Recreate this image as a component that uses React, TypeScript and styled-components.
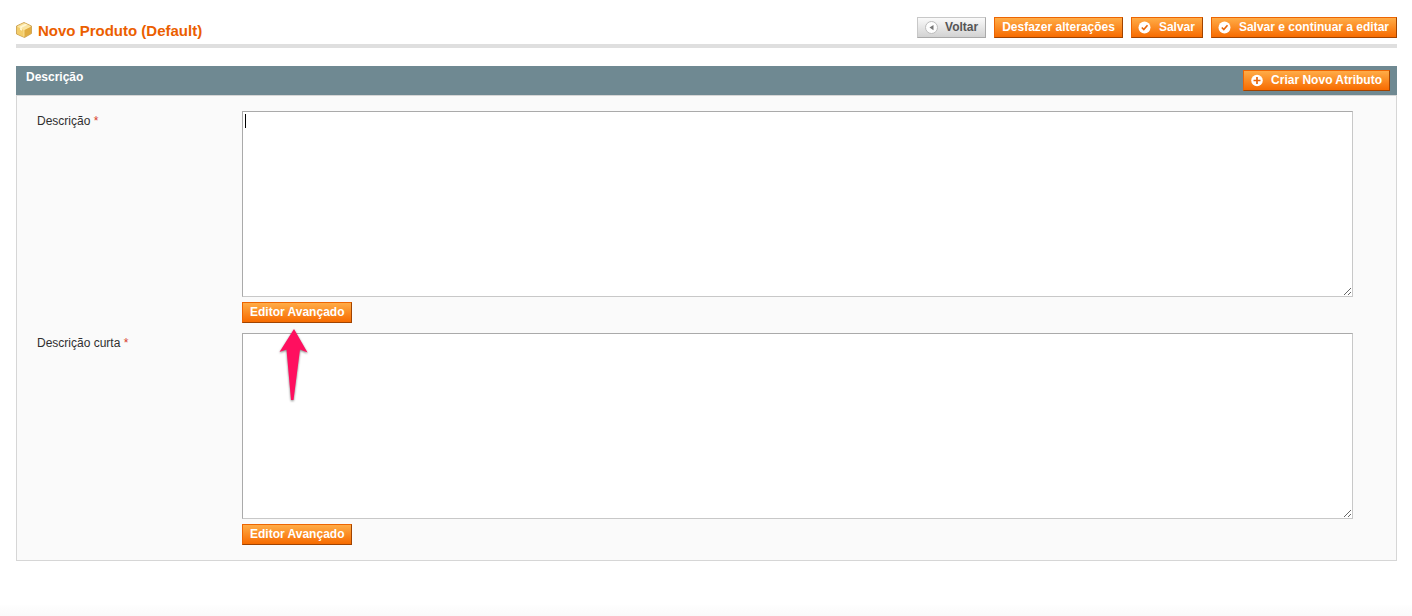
import React from 'react';
import styled, { createGlobalStyle, css } from 'styled-components';

const GlobalStyle = createGlobalStyle`
  *, *::before, *::after { box-sizing: border-box; }
  body {
    margin: 0;
    background: #fff;
    color: #2f2f2f;
    font: 12px/18px Arial, "Liberation Sans", sans-serif;
  }
`;

const Page = styled.main`
  min-height: 100vh;
  padding: 17px 15px 16px 16px;
  background: linear-gradient(#fefefe, #fafafa) bottom / 100% 11px no-repeat;
`;

const ContentHeader = styled.header`
  display: flex;
  justify-content: space-between;
  align-items: flex-start;
  margin-bottom: 18px;
  padding-bottom: 4px;
  border-bottom: 4px solid #dfdfdf;
`;

const Title = styled.h1`
  display: flex;
  align-items: flex-start;
  gap: 6px;
  margin: 5px 0 0;
  color: #eb5e00;
  font-size: 15px;
  line-height: 18px;
`;

const Actions = styled.div`
  display: flex;
  gap: 8px;
`;

const Button = styled.button<{ $variant?: 'back' }>`
  display: inline-flex;
  align-items: center;
  gap: 8px;
  padding: 1px 7px 2px;
  border: 1px solid;
  border-color: #ed6502 #a04300 #a04300 #ed6502;
  background: linear-gradient(#ffac47, #f76b00);
  color: #fff;
  font: bold 12px/16px Arial, "Liberation Sans", sans-serif;
  white-space: nowrap;
  cursor: pointer;

  ${({ $variant }) =>
    $variant === 'back' &&
    css`
      border-color: #c8c8c8 #a9a9a9 #a9a9a9 #c8c8c8;
      background: linear-gradient(#fafafa, #d2d2d2);
      color: #555;
    `}
`;

const ButtonIcon = styled.svg`
  flex: none;
  width: 12px;
  height: 12px;
  overflow: visible;
`;

const PanelHead = styled.div`
  display: flex;
  justify-content: space-between;
  align-items: flex-start;
  padding: 4px 7px 4px 10px;
  background: #6f8992;
`;

const PanelTitle = styled.h2`
  margin: 0;
  color: #fff;
  font-size: 12px;
  line-height: 14px;
`;

const Fieldset = styled.div`
  display: grid;
  gap: 10px;
  padding: 15px 43px 15px 20px;
  border: 1px solid #d6d6d6;
  background: #fafafa;
`;

const Field = styled.div`
  display: grid;
  grid-template-columns: 205px 1fr;
`;

const Label = styled.label`
  line-height: 20px;
`;

const Required = styled.span`
  color: #d8402c;
`;

const Control = styled.div`
  position: relative;
  display: flex;
  flex-direction: column;
  align-items: flex-start;
  gap: 5px;
`;

const TextArea = styled.textarea`
  display: block;
  width: 100%;
  height: 186px;
  padding: 2px;
  border: 1px solid;
  border-color: #aaa #c8c8c8 #c8c8c8 #aaa;
  background: #fff;
  color: #2f2f2f;
  font: 12px/15px Arial, "Liberation Sans", sans-serif;
  outline: none;
`;

const Caret = styled.span`
  position: absolute;
  top: 3px;
  left: 3px;
  width: 1px;
  height: 14px;
  background: #000;
`;

const Pointer = styled.svg`
  position: absolute;
  top: 217px;
  left: 36px;
  width: 32px;
  height: 78px;
  z-index: 1;
  pointer-events: none;
  filter: drop-shadow(0 1px 1px rgba(0, 0, 0, 0.5));
`;

const BoxIcon = () => (
  <svg width="16" height="16" viewBox="0 0 16 16" aria-hidden="true">
    <path d="M8 .5 15.500 4v7.500L8.500 15.500.5 12V4z" fill="#e6b650" stroke="#c79a48" strokeWidth=".8" />
    <path d="M8 1 15 4.200 8 8 1 4.200z" fill="#f9e3a0" />
    <path d="M1 4.500 8 8v7L1 11.700z" fill="#f3cd6a" />
    <path d="M8 8l7-3.500v6.800L8 15z" fill="#e0ac40" />
    <path d="M9.500 1.800 4 4.500v3.200l2 1V5.500L11.500 2.800z" fill="#fff6d2" />
    <path d="M1.500 4.500 8 7.800l6.500-3.300M8 7.800v6.700" fill="none" stroke="#ffedb0" strokeWidth=".7" />
  </svg>
);

const BackIcon = () => (
  <ButtonIcon viewBox="0 0 12 12" aria-hidden="true">
    <circle cx="6.500" cy="6.500" r="6" fill="#fdfdfd" stroke="#bdbdbd" />
    <path d="M8.500 4v5.200L4.500 6.600z" fill="#777" />
  </ButtonIcon>
);

const CheckIcon = () => (
  <ButtonIcon viewBox="0 0 12 12" aria-hidden="true">
    <circle cx="5.500" cy="6.500" r="6" fill="#fff" />
    <path d="M2.800 6.500 4.800 8.600 8.500 4.200" fill="none" stroke="#e8650a" strokeWidth="1.600" />
  </ButtonIcon>
);

const PlusIcon = () => (
  <ButtonIcon viewBox="0 0 12 12" aria-hidden="true">
    <circle cx="6" cy="6.500" r="5.800" fill="#fff" />
    <path d="M6 3v7M2.500 6.500h7" stroke="#e8650a" strokeWidth="1.700" />
  </ButtonIcon>
);

type EditorFieldProps = { id: string; label: string; children?: React.ReactNode };

const EditorField = ({ id, label, children }: EditorFieldProps) => (
  <Field>
    <Label htmlFor={id}>
      {label} <Required>*</Required>
    </Label>
    <Control>
      <TextArea id={id} name={id} required />
      <Button type="button">Editor Avançado</Button>
      {children}
    </Control>
  </Field>
);

export default function App() {
  return (
    <>
      <GlobalStyle />
      <Page>
        <ContentHeader>
          <Title>
            <BoxIcon />
            Novo Produto (Default)
          </Title>
          <Actions>
            <Button type="button" $variant="back">
              <BackIcon />
              Voltar
            </Button>
            <Button type="reset">Desfazer alterações</Button>
            <Button type="submit">
              <CheckIcon />
              Salvar
            </Button>
            <Button type="submit">
              <CheckIcon />
              Salvar e continuar a editar
            </Button>
          </Actions>
        </ContentHeader>
        <section>
          <PanelHead>
            <PanelTitle>Descrição</PanelTitle>
            <Button type="button">
              <PlusIcon />
              Criar Novo Atributo
            </Button>
          </PanelHead>
          <Fieldset>
            <EditorField id="description" label="Descrição">
              <Caret />
              <Pointer viewBox="0 0 32 78" aria-hidden="true">
                <path d="M16 1 29.500 24.500 22 21.500 15.500 72H13L8.500 21.500 1.500 24z" fill="#ff0f5f" />
              </Pointer>
            </EditorField>
            <EditorField id="short_description" label="Descrição curta" />
          </Fieldset>
        </section>
      </Page>
    </>
  );
}
